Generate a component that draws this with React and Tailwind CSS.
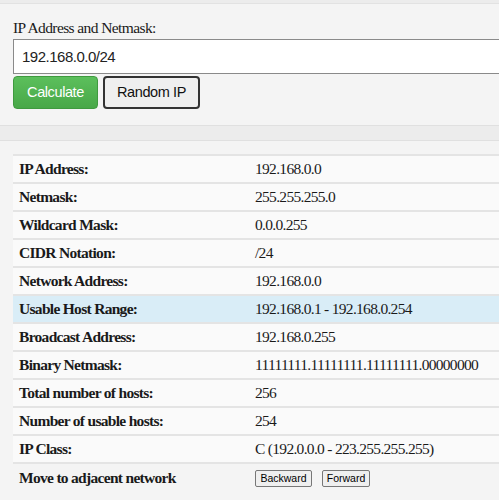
import React, { useState } from 'react';

const rows = [
    ['IP Address:', '192.168.0.0'],
    ['Netmask:', '255.255.255.0'],
    ['Wildcard Mask:', '0.0.0.255'],
    ['CIDR Notation:', '/24'],
    ['Network Address:', '192.168.0.0'],
    ['Usable Host Range:', '192.168.0.1 - 192.168.0.254', true],
    ['Broadcast Address:', '192.168.0.255'],
    ['Binary Netmask:', '11111111.11111111.11111111.00000000'],
    ['Total number of hosts:', '256'],
    ['Number of usable hosts:', '254'],
    ['IP Class:', 'C (192.0.0.0 - 223.255.255.255)'],
];

export default function App() {
    const [ip, setIp] = useState('192.168.0.0/24');

    return (
        <div className="w-[499px] h-[500px] overflow-hidden bg-[#f4f4f4] font-['Liberation_Serif',serif] text-[#1a1a1a]">
            <div className="h-[4px] bg-[#ececec] border-b border-[#e2e2e2]"></div>
            <div className="pl-[13px] pt-[15px]">
                <label className="block text-[15.5px] tracking-[-0.6px] leading-[18px] mb-[2px]">IP Address and Netmask:</label>
                <input
                    type="text"
                    value={ip}
                    onChange={(e) => setIp(e.target.value)}
                    className="block w-[500px] h-[35px] px-[8px] bg-white border border-[#8a8a8a] text-[15px] tracking-[-0.5px] font-['Liberation_Sans',sans-serif] text-[#222] outline-none"
                />
                <div className="flex gap-[5px] mt-[2px]">
                    <button className="w-[85px] h-[33px] rounded-[4px] border border-[#3f9a3f] bg-gradient-to-b from-[#5cbf5c] to-[#48a848] text-white text-[14.5px] tracking-[-0.4px] font-['Liberation_Sans',sans-serif]">
                        Calculate
                    </button>
                    <button className="w-[97px] h-[33px] rounded-[4px] border-2 border-[#333] bg-[#efefef] text-[#111] text-[14.5px] tracking-[-0.4px] font-['Liberation_Sans',sans-serif]">
                        Random IP
                    </button>
                </div>
            </div>
            <div className="mt-[16px] h-[16px] bg-[#ececec] border-y border-[#e0e0e0]"></div>
            <div className="pl-[13px] pt-[13px]">
                <table className="w-[500px] border-collapse text-[15.5px] tracking-[-0.7px]">
                    <tbody>
                        {rows.map(([label, value, hl]) => (
                            <tr key={label} className={`h-[28px] border-t-2 border-[#e4e4e4] ${hl ? 'bg-[#d9edf7]' : 'bg-[#fafafa]'}`}>
                                <td className="w-[236px] pl-[6px] font-bold">{label}</td>
                                <td className="pl-[6px]">{value}</td>
                            </tr>
                        ))}
                        <tr className="h-[28px] border-t-2 border-[#e4e4e4]">
                            <td className="pl-[6px] font-bold">Move to adjacent network</td>
                            <td className="pl-[6px]">
                                <div className="flex gap-[10px] pt-[2px] tracking-normal">
                                    <button className="w-[57px] h-[17px] leading-[15px] rounded-[2px] border border-[#777] bg-[#efefef] text-[10.5px] font-['Liberation_Sans',sans-serif] text-black">Backward</button>
                                    <button className="w-[48px] h-[17px] leading-[15px] rounded-[2px] border border-[#777] bg-[#efefef] text-[10.5px] font-['Liberation_Sans',sans-serif] text-black">Forward</button>
                                </div>
                            </td>
                        </tr>
                    </tbody>
                </table>
            </div>
        </div>
    );
}
